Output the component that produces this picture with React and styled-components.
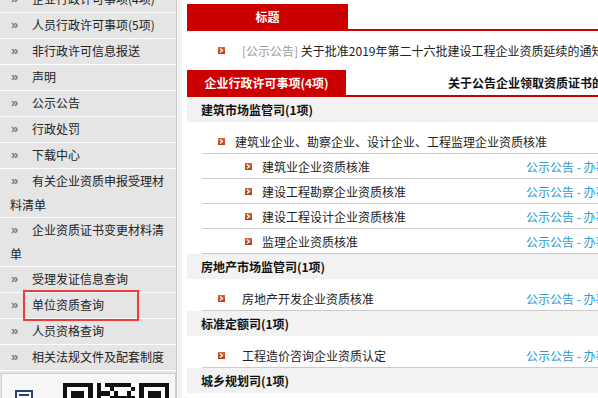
import React from "react"
import styled, { createGlobalStyle } from "styled-components"

const GlobalStyle = createGlobalStyle`
  html, body {
    margin: 0;
    padding: 0;
    background: #fff;
    overflow: hidden;
  }
  body {
    font-family: "Noto Sans CJK SC", "Noto Sans", sans-serif;
    font-size: 12px;
    color: #222;
  }
`

const menu = [
  "企业行政许可事项(4项)",
  "人员行政许可事项(5项)",
  "非行政许可信息报送",
  "声明",
  "公示公告",
  "行政处罚",
  "下载中心",
  "有关企业资质申报受理材料清单",
  "企业资质证书变更材料清单",
  "受理发证信息查询",
  "单位资质查询",
  "人员资格查询",
  "相关法规文件及配套制度",
]

const sections = [
  {
    title: "建筑市场监管司(1项)",
    items: [
      {
        name: "建筑业企业、勘察企业、设计企业、工程监理企业资质核准",
        children: [
          "建筑业企业资质核准",
          "建设工程勘察企业资质核准",
          "建设工程设计企业资质核准",
          "监理企业资质核准",
        ],
      },
    ],
  },
  { title: "房地产市场监管司(1项)", items: [{ name: "房地产开发企业资质核准" }] },
  { title: "标准定额司(1项)", items: [{ name: "工程造价咨询企业资质认定" }] },
  { title: "城乡规划司(1项)", items: [] },
]

const Bullet = () => (
  <BulletSvg width="7" height="7" viewBox="0 0 7 7">
    <defs>
      <linearGradient id="bg" x1="0" y1="0" x2="0" y2="1">
        <stop offset="0" stopColor="#d9673a" />
        <stop offset="1" stopColor="#a8401c" />
      </linearGradient>
    </defs>
    <rect width="7" height="7" fill="url(#bg)" />
    <polyline points="2,1.5 4.5,3.5 2,5.5" fill="none" stroke="#fff" strokeWidth="1.2" />
  </BulletSvg>
)

const QrCode = () => {
  const n = 25
  const cells = []
  let seed = 7
  const rnd = () => {
    seed = (seed * 1103515245 + 12345) % 2147483648
    return seed / 2147483648
  }
  const inFinder = (x, y) =>
    (x < 8 && y < 8) || (x >= n - 8 && y < 8) || (x < 8 && y >= n - 8)
  for (let y = 0; y < n; y++) {
    for (let x = 0; x < n; x++) {
      if (!inFinder(x, y) && rnd() > 0.5) cells.push([x, y])
    }
  }
  const finder = (fx, fy) => (
    <g key={`${fx}-${fy}`}>
      <rect x={fx} y={fy} width="7" height="7" fill="#111" />
      <rect x={fx + 1} y={fy + 1} width="5" height="5" fill="#fff" />
      <rect x={fx + 2} y={fy + 2} width="3" height="3" fill="#111" />
    </g>
  )
  return (
    <svg width="106" height="106" viewBox="0 0 25 25" shapeRendering="crispEdges">
      <rect width="25" height="25" fill="#fff" />
      {cells.map(([x, y]) => (
        <rect key={`${x}:${y}`} x={x} y={y} width="1" height="1" fill="#111" />
      ))}
      {finder(0, 0)}
      {finder(n - 7, 0)}
      {finder(0, n - 7)}
    </svg>
  )
}

const App = () => (
  <>
    <GlobalStyle />
    <Page>
      <Sidebar>
        <MenuList>
          {menu.map((label) => (
            <MenuItem key={label}>
              <Arrow>»</Arrow>
              {label}
              {label === "单位资质查询" && <Highlight />}
            </MenuItem>
          ))}
        </MenuList>
        <QrPanel>
          <Emblem viewBox="0 0 20 20" width="20" height="20">
            <rect x="2" y="4" width="16" height="14" fill="none" stroke="#2b3f6b" strokeWidth="2" />
            <line x1="5" y1="8" x2="15" y2="8" stroke="#2b3f6b" strokeWidth="2" />
          </Emblem>
          <QrCode />
        </QrPanel>
      </Sidebar>
      <Gutter />
      <Main>
        <TabBar>
          <Tab>标题</Tab>
        </TabBar>
        <Notice>
          <Bullet />
          <NoticeText>
            <Tag>[公示公告]</Tag> 关于批准2019年第二十六批建设工程企业资质延续的通知
          </NoticeText>
        </Notice>
        <TabBar>
          <Tab $narrow>企业行政许可事项(4项)</Tab>
          <InactiveTab>关于公告企业领取资质证书的通知</InactiveTab>
        </TabBar>
        {sections.map((section) => (
          <Section key={section.title}>
            <SectionHeader>{section.title}</SectionHeader>
            {section.items.map((item) =>
              item.children ? (
                <React.Fragment key={item.name}>
                  <ItemRow>
                    <ItemName $gap={10}>
                      <Bullet />
                      {item.name}
                    </ItemName>
                  </ItemRow>
                  {item.children.map((child) => (
                    <SubRow key={child}>
                      <ItemName $gap={10}>
                        <Bullet />
                        {child}
                      </ItemName>
                      <Links>公示公告 - 办事指南</Links>
                    </SubRow>
                  ))}
                </React.Fragment>
              ) : (
                <ItemRow key={item.name}>
                  <ItemName $gap={17}>
                    <Bullet />
                    {item.name}
                  </ItemName>
                  <Links>公示公告 - 办事指南</Links>
                </ItemRow>
              )
            )}
          </Section>
        ))}
      </Main>
    </Page>
  </>
)

export default App

const Page = styled.div`
  display: flex;
  width: 598px;
  height: 398px;
  overflow: hidden;
  background: #fff;
`

const Sidebar = styled.aside`
  flex: none;
  width: 176px;
  background: #e5e5e5;
  border-right: 1px solid #cccccc;
  display: flex;
  flex-direction: column;
`

const MenuList = styled.ul`
  list-style: none;
  margin: -13px 0 0;
  padding: 0;
`

const MenuItem = styled.li`
  position: relative;
  min-height: 25px;
  padding: 0 8px 0 10px;
  line-height: 24px;
  border-bottom: 1px solid #fff;
  color: #222;
`

const Arrow = styled.span`
  display: inline-block;
  width: 22px;
  height: 24px;
  padding-left: 1px;
  box-sizing: border-box;
  vertical-align: top;
  line-height: 24px;
  color: #777;
  font-family: "Liberation Sans", sans-serif;
  font-size: 13px;
  font-weight: bold;
`

const Highlight = styled.span`
  position: absolute;
  left: 23px;
  top: -3px;
  width: 116px;
  height: 31px;
  box-sizing: border-box;
  border: 2px solid #f03a3a;
`

const QrPanel = styled.div`
  display: flex;
  align-items: flex-start;
  gap: 29px;
  margin: 2px 0 0 1px;
  padding: 9px 0 0 12px;
  height: 120px;
  background: #f7f7f7;
  border: 1px solid #cfcfcf;
`

const Emblem = styled.svg`
  flex: none;
  margin-top: 4px;
`

const Gutter = styled.div`
  flex: none;
  width: 5px;
  background: #f3f3f3;
`

const Main = styled.main`
  flex: none;
  width: 460px;
  margin-left: 5px;
  padding-top: 4px;
`

const TabBar = styled.div`
  display: flex;
  white-space: nowrap;
  border-bottom: 2px solid #cc0000;
`

const Tab = styled.div`
  flex: none;
  width: ${(p) => (p.$narrow ? "159px" : "161px")};
  height: 25px;
  line-height: 25px;
  background: #cc0000;
  color: #fff;
  font-weight: bold;
  text-align: center;
`

const InactiveTab = styled.div`
  padding-left: 102px;
  line-height: 25px;
  font-weight: bold;
  color: #111;
`

const Notice = styled.div`
  display: flex;
  align-items: center;
  height: 39px;
  padding-left: 31px;
  white-space: nowrap;
`

const NoticeText = styled.span`
  margin-left: 17px;
  color: #222;
`

const Tag = styled.span`
  color: #999;
`

const Section = styled.section`
  display: flex;
  flex-direction: column;
`

const SectionHeader = styled.div`
  height: 25px;
  line-height: 25px;
  padding-left: 14px;
  background: #f2f2f2;
  font-weight: bold;
  color: #111;
`

const ItemRow = styled.div`
  display: grid;
  grid-template-columns: 1fr 121px;
  align-items: center;
  height: 23px;
  margin: 8px 0 0 15px;
  padding-left: 16px;
  border-bottom: 1px solid #cccccc;
  white-space: nowrap;
`

const SubRow = styled(ItemRow)`
  height: 24px;
  margin-top: 0;
  padding-left: 43px;
`

const ItemName = styled.span`
  display: flex;
  align-items: center;
  gap: ${(p) => p.$gap}px;
  color: #222;
`

const BulletSvg = styled.svg`
  flex: none;
  display: block;
`

const Links = styled.span`
  color: #2a9ad6;
  overflow: hidden;
`
